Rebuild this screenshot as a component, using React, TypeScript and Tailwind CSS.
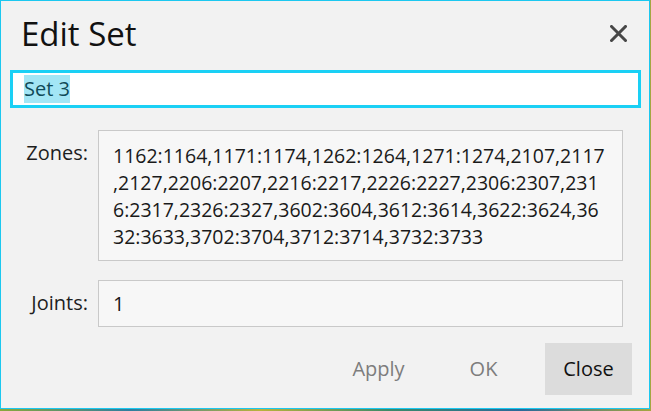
export default function App() {
  const lines = [
    "1162:1164,1171:1174,1262:1264,1271:1274,2107,2117",
    ",2127,2206:2207,2216:2217,2226:2227,2306:2307,231",
    "6:2317,2326:2327,3602:3604,3612:3614,3622:3624,36",
    "32:3633,3702:3704,3712:3714,3732:3733",
  ];
  return (
    <div className="w-[651px] h-[411px] overflow-hidden bg-[linear-gradient(90deg,#8aa83a,#2f7ea0,#b9b23c,#3a8a6a,#2a6a9a,#a6a640)] font-['Open_Sans',sans-serif]">
      <div className="w-[650px] h-[409px] border border-[#1cc8f0] bg-[#f2f2f2] flex flex-col">
        <div className="h-[69px] flex items-start justify-between pl-[20px] pr-[22px] pt-[10px]">
          <div className="text-[33px] leading-[45px] text-[#111]">Edit Set</div>
          <svg width="17" height="17" viewBox="0 0 17 17" className="mt-[14px]">
            <path d="M1.5 1.5L15.5 15.5M15.5 1.5L1.5 15.5" stroke="#474747" strokeWidth="3" strokeLinecap="square" />
          </svg>
        </div>
        <div className="ml-[9px] mr-[8px] h-[38px] border-[3px] border-[#1ad0f5] bg-white flex items-center pl-[11px]">
          <span className="text-[20px] leading-[28px] bg-[#a3e6f5] text-[#0f4a58]">Set 3</span>
        </div>
        <div className="mt-[22px] flex">
          <div className="w-[87px] text-right pt-[9px] text-[20px] leading-[27px] text-[#1e1e1e]">Zones:</div>
          <div className="ml-[10px] w-[525px] h-[131px] border border-[#c9c9c9] bg-[#f7f7f7] pl-[14px] pt-[11px] text-[19.5px] leading-[27px] text-[#1a1a1a] whitespace-pre">
            {lines.map((l, i) => (
              <div key={i}>{l}</div>
            ))}
          </div>
        </div>
        <div className="mt-[19px] flex">
          <div className="w-[87px] text-right pt-[9px] text-[20px] leading-[27px] text-[#1e1e1e]">Joints:</div>
          <div className="ml-[10px] w-[525px] h-[47px] border border-[#c9c9c9] bg-[#f7f7f7] pl-[14px] flex items-center text-[20px] leading-[27px] text-[#1a1a1a]">
            1
          </div>
        </div>
        <div className="mt-[16px] flex justify-end gap-[18px] pr-[17px]">
          <div className="w-[87px] h-[52px] flex items-center justify-center text-[20px] text-[#7d7d7d]">Apply</div>
          <div className="w-[87px] h-[52px] flex items-center justify-center text-[20px] text-[#7d7d7d]">OK</div>
          <div className="w-[87px] h-[52px] flex items-center justify-center text-[20px] text-[#111] bg-[#dcdcdc]">Close</div>
        </div>
      </div>
    </div>
  );
}
